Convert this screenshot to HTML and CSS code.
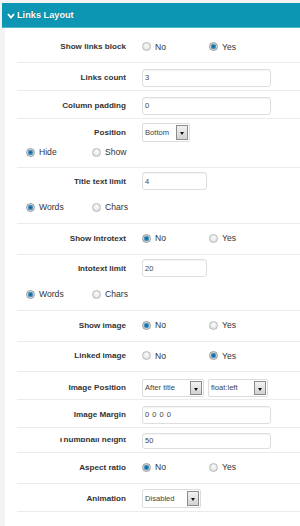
FILE: index.html
```html
<!DOCTYPE html>
<html>
<head>
<meta charset="utf-8">
<link rel="stylesheet" href="styles.css">
</head>
<body>
<div class="panel">
  <div class="header">
    <svg class="chev" width="8" height="6" viewBox="0 0 8 6"><path d="M1 1 L4 4.5 L7 1" fill="none" stroke="#fff" stroke-width="1.8"/></svg>
    <span>Links Layout</span>
  </div>
  <div class="content">
    <div class="row h35 pt3">
      <label class="lbl">Show links block</label>
      <div class="radios"><span class="opt"><i class="radio"></i>No</span><span class="opt"><i class="radio on"></i>Yes</span></div>
    </div>
    <div class="row h28 pt2">
      <label class="lbl">Links count</label>
      <div class="input w129">3</div>
    </div>
    <div class="row h28 pt2">
      <label class="lbl">Column padding</label>
      <div class="input w129">0</div>
    </div>
    <div class="group h49">
      <div class="line pt4">
        <label class="lbl">Position</label>
        <div class="select w47"><span class="val">Bottom</span><span class="arr"></span></div>
      </div>
      <div class="subopts"><span class="opt"><i class="radio on"></i>Hide</span><span class="opt"><i class="radio"></i>Show</span></div>
    </div>
    <div class="group h56">
      <div class="line pt4">
        <label class="lbl">Title text limit</label>
        <div class="input w65">4</div>
      </div>
      <div class="subopts mt7"><span class="opt"><i class="radio on"></i>Words</span><span class="opt"><i class="radio"></i>Chars</span></div>
    </div>
    <div class="row h31 pb2">
      <label class="lbl">Show Introtext</label>
      <div class="radios"><span class="opt"><i class="radio on"></i>No</span><span class="opt"><i class="radio"></i>Yes</span></div>
    </div>
    <div class="group h56">
      <div class="line pt4">
        <label class="lbl">Intotext limit</label>
        <div class="input w65">20</div>
      </div>
      <div class="subopts mt7"><span class="opt"><i class="radio on"></i>Words</span><span class="opt"><i class="radio"></i>Chars</span></div>
    </div>
    <div class="row h31 pb2">
      <label class="lbl">Show image</label>
      <div class="radios"><span class="opt"><i class="radio on"></i>No</span><span class="opt"><i class="radio"></i>Yes</span></div>
    </div>
    <div class="row h30 pb2">
      <label class="lbl">Linked image</label>
      <div class="radios"><span class="opt"><i class="radio"></i>No</span><span class="opt"><i class="radio on"></i>Yes</span></div>
    </div>
    <div class="row h28 pt4">
      <label class="lbl">Image Position</label>
      <div class="selects">
        <div class="select w62"><span class="val">After title</span><span class="arr"></span></div>
        <div class="select w60"><span class="val">float:left</span><span class="arr"></span></div>
      </div>
    </div>
    <div class="row h28 pt2">
      <label class="lbl">Image Margin</label>
      <div class="input w129 spaced">0 0 0 0</div>
    </div>
    <div class="row h25 pt1">
      <label class="lbl clip"><span>Thumbnail height</span></label>
      <div class="input w129 short">50</div>
    </div>
    <div class="row h31 pb2">
      <label class="lbl">Aspect ratio</label>
      <div class="radios"><span class="opt"><i class="radio on"></i>No</span><span class="opt"><i class="radio"></i>Yes</span></div>
    </div>
    <div class="row h28 pt2">
      <label class="lbl">Animation</label>
      <div class="select w59"><span class="val">Disabled</span><span class="arr"></span></div>
    </div>
  </div>
</div>
</body>
</html>
```
FILE: styles.css
```css
* { box-sizing: border-box; }
html, body { margin: 0; padding: 0; }
body {
  background: #f3f3f3;
  font-family: "Liberation Sans", Arial, sans-serif;
  color: #333;
  width: 300px;
  height: 526px;
  overflow: hidden;
}
.panel {
  margin: 3px 0 0 2px;
  height: 523px;
}
.header {
  height: 25px;
  background: #0c96b3;
  border-bottom: 1px solid #4cb6cc;
  display: flex;
  align-items: center;
  padding-left: 5px;
  color: #fff;
  font-weight: bold;
  font-size: 9.2px;
  text-shadow: 0 0 1px rgba(0,0,0,0.35);
}
.chev { margin-right: 2px; margin-top: 1px; }
.content {
  margin-left: 3px;
  background: #fff;
  height: 498px;
}
.row, .group {
  margin-left: 12px;
  border-bottom: 1px solid #ebebeb;
}
.row { display: flex; align-items: center; }
.line { display: flex; align-items: flex-start; }
.line .lbl { padding-top: 5px; }
.h25 { height: 25px; }
.h28 { height: 28px; }
.h30 { height: 30px; }
.h31 { height: 31px; }
.h35 { height: 35px; }
.h49 { height: 49px; }
.h56 { height: 56px; }
.pt1 { padding-top: 1px; }
.pt2 { padding-top: 2px; }
.pt3 { padding-top: 3px; }
.pt4 { padding-top: 4px; }
.pb2 { padding-bottom: 2px; }
.mt7 { margin-top: 7px; }
.lbl {
  width: 109px;
  flex: none;
  text-align: right;
  font-weight: bold;
  font-size: 8.1px;
  color: #333;
  margin-right: 16px;
}
.clip {
  height: 6px;
  overflow: hidden;
  display: flex;
  justify-content: flex-end;
  align-items: flex-end;
}
.clip span { line-height: 9px; display: block; }
.radios { display: flex; }
.opt {
  width: 67px;
  display: flex;
  align-items: center;
  font-size: 8.6px;
  color: #333;
}
.radio {
  width: 9px;
  height: 9px;
  border-radius: 50%;
  border: 1px solid #b9b9b9;
  background: radial-gradient(circle at 50% 40%, #fdfdfd 0, #e6e6e6 60%, #cfcfcf 100%);
  margin-right: 4px;
  flex: none;
}
.radio.on {
  border-color: #9a9a9a;
  background: radial-gradient(circle, #0d5f92 0, #2a86bd 1.8px, #7fa8c2 2.6px, #e2e2e2 3.2px, #c8c8c8 4.5px);
}
.subopts {
  display: flex;
  height: 20px;
  align-items: center;
  padding-left: 9px;
}
.subopts .opt { width: 66px; }
.input {
  height: 18px;
  border: 1px solid #dedede;
  border-radius: 3px;
  box-shadow: inset 0 1px 1px rgba(0,0,0,0.05);
  font-size: 7.5px;
  color: #444;
  padding-left: 2px;
  display: flex;
  align-items: center;
  flex: none;
}
.input.short { height: 16px; }
.input.spaced { letter-spacing: 0.5px; }
.w129 { width: 129px; }
.w65 { width: 65px; }
.select {
  height: 19px;
  border: 1px solid #dcdcdc;
  border-radius: 2px;
  display: flex;
  align-items: center;
  justify-content: space-between;
  padding: 1px 1px 1px 2px;
  font-size: 7.6px;
  color: #444;
  flex: none;
  background: #fff;
}
.w47 { width: 48px; }
.w59 { width: 59px; }
.w60 { width: 60px; }
.w62 { width: 62px; }
.selects { display: flex; gap: 4px; }
.selects .select { height: 18px; }
.arr {
  width: 12px;
  height: 100%;
  border: 1px solid #8c8c8c;
  background: linear-gradient(#f2f2f2, #d2d2d2);
  position: relative;
  flex: none;
}
.arr::after {
  content: "";
  position: absolute;
  left: 3px;
  top: 6px;
  border-left: 2.5px solid transparent;
  border-right: 2.5px solid transparent;
  border-top: 3px solid #111;
}
```
